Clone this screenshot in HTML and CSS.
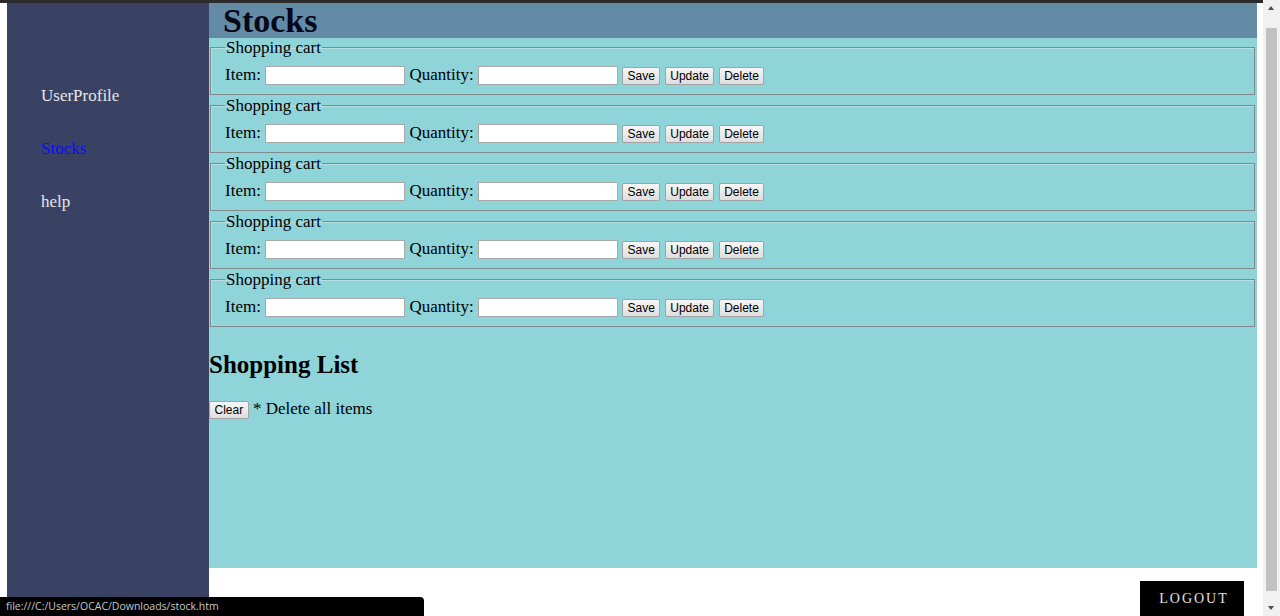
FILE: index.html
```html
<!DOCTYPE html>
<html>
<head>
<meta charset="utf-8">
<title>Stocks</title>
<link rel="stylesheet" href="styles.css">
</head>
<body>
<div class="topstrip"></div>
<div class="page">
  <nav class="sidebar">
    <ul class="menu">
      <li><a class="link" href="#">UserProfile</a></li>
      <li><a class="link active" href="#">Stocks</a></li>
      <li><a class="link" href="#">help</a></li>
    </ul>
  </nav>
  <div class="main">
    <header class="header"><h1 class="title">Stocks</h1></header>
    <section class="content">
      <fieldset class="cart"><legend class="legend">Shopping cart</legend>Item: <input class="field" type="text"> Quantity: <input class="field" type="text"> <button class="btn">Save</button> <button class="btn">Update</button> <button class="btn">Delete</button></fieldset>
      <fieldset class="cart"><legend class="legend">Shopping cart</legend>Item: <input class="field" type="text"> Quantity: <input class="field" type="text"> <button class="btn">Save</button> <button class="btn">Update</button> <button class="btn">Delete</button></fieldset>
      <fieldset class="cart"><legend class="legend">Shopping cart</legend>Item: <input class="field" type="text"> Quantity: <input class="field" type="text"> <button class="btn">Save</button> <button class="btn">Update</button> <button class="btn">Delete</button></fieldset>
      <fieldset class="cart"><legend class="legend">Shopping cart</legend>Item: <input class="field" type="text"> Quantity: <input class="field" type="text"> <button class="btn">Save</button> <button class="btn">Update</button> <button class="btn">Delete</button></fieldset>
      <fieldset class="cart"><legend class="legend">Shopping cart</legend>Item: <input class="field" type="text"> Quantity: <input class="field" type="text"> <button class="btn">Save</button> <button class="btn">Update</button> <button class="btn">Delete</button></fieldset>
      <h2 class="subtitle">Shopping List</h2>
      <div class="clear-row"><button class="btn">Clear</button> * Delete all items</div>
    </section>
    <div class="footer"><button class="logout">LOGOUT</button></div>
  </div>
</div>
<div class="scrollbar">
  <div class="arrow up"></div>
  <div class="thumb"></div>
  <div class="arrow down"></div>
</div>
<div class="status">file:///C:/Users/OCAC/Downloads/stock.htm</div>
</body>
</html>
```
FILE: styles.css
```css
html, body {
  margin: 0;
  padding: 0;
  height: 100%;
  overflow: hidden;
  background: #ffffff;
  font-family: "Liberation Serif", "Times New Roman", serif;
  font-size: 17px;
  color: #000;
}

.topstrip {
  height: 3px;
  background: #2b2b2b;
}

.page {
  display: flex;
  padding-left: 7px;
  height: 613px;
}

.sidebar {
  width: 202px;
  flex: none;
  background: #394263;
}

.menu {
  list-style: none;
  margin: 0;
  padding: 83px 0 0 34px;
}

.menu li {
  height: 53px;
}

.link {
  color: #e6e6e6;
  text-decoration: none;
  font-size: 17px;
}

.link.active {
  color: #0a0aff;
}

.main {
  width: 1048px;
  flex: none;
  display: flex;
  flex-direction: column;
}

.header {
  height: 35px;
  flex: none;
  background: #638ba6;
  padding-left: 14px;
}

.title {
  margin: 0;
  font-size: 34px;
  line-height: 35px;
  font-weight: bold;
  color: #06081a;
}

.content {
  height: 530px;
  flex: none;
  background: #8ed4d9;
}

.cart {
  margin: 0 2px 1px 1px;
  padding: 5px 14px 6px;
  border: 1px solid #7f8a8c;
  box-shadow: inset 1px 1px 0 #b5dfe2;
  line-height: 26px;
}

.legend {
  padding: 0 1px;
  line-height: 19px;
}

.field {
  width: 140px;
  height: 19px;
  box-sizing: border-box;
  border: 1px solid #a9a9a9;
  background: #fff;
  padding: 1px 2px;
  margin: 0;
  font-size: 13px;
}

.btn {
  font-family: "Liberation Sans", Arial, sans-serif;
  font-size: 12px;
  height: 18px;
  line-height: 14px;
  padding: 1px 4.5px;
  margin: 0;
  border: 1px solid #a3a3a3;
  border-radius: 2px;
  background: linear-gradient(#f6f6f6, #dedede);
  color: #000;
}

.subtitle {
  margin: 24px 0 0 0;
  font-size: 25px;
  line-height: 28px;
}

.clear-row {
  margin-top: 20px;
}

.footer {
  display: flex;
  justify-content: flex-end;
  padding: 13px 13px 0 0;
}

.logout {
  width: 104px;
  height: 46px;
  background: #000;
  color: #e2e2e2;
  border: none;
  font-family: "Liberation Serif", "Times New Roman", serif;
  font-size: 14px;
  letter-spacing: 2px;
  padding: 0 0 11px 4px;
}

.scrollbar {
  position: fixed;
  top: 0;
  right: 0;
  width: 17px;
  height: 616px;
  background: #f1f1f1;
  display: flex;
  flex-direction: column;
  align-items: center;
}

.arrow {
  height: 17px;
  width: 17px;
  flex: none;
  position: relative;
}

.arrow::after {
  content: "";
  position: absolute;
  left: 5px;
  border-left: 3.5px solid transparent;
  border-right: 3.5px solid transparent;
}

.arrow.up::after {
  top: 6px;
  border-bottom: 4px solid #505050;
}

.arrow.down::after {
  top: 7px;
  border-top: 4px solid #505050;
}

.thumb {
  flex: 1;
  width: 11px;
  margin: 11px 0 8px;
  background: #c1c1c1;
}

.status {
  position: fixed;
  left: 0;
  bottom: 0;
  width: 418px;
  height: 19px;
  padding-left: 6px;
  background: #000;
  color: #c8c8c8;
  font-family: "Open Sans", "Noto Sans", sans-serif;
  font-size: 10.5px;
  line-height: 19px;
  border-top-right-radius: 4px;
}
```
